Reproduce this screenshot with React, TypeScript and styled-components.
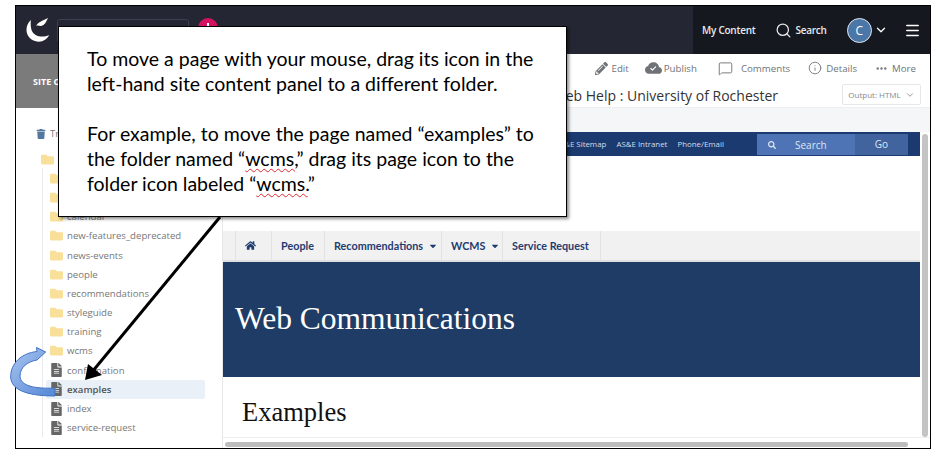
import React from 'react';
import styled, { createGlobalStyle } from 'styled-components';
import { FaTrash, FaFolder, FaFileAlt, FaHome, FaPencilAlt, FaCaretDown, FaSearch } from 'react-icons/fa';
import { BsCloudCheckFill } from 'react-icons/bs';
import { MessageSquare, Info, MoreHorizontal, Search, ChevronDown, Menu } from 'lucide-react';

const GlobalStyle = createGlobalStyle`
  html, body {
    margin: 0;
    padding: 0;
    background: #fff;
    overflow: hidden;
  }
  * { box-sizing: border-box; }
`;

// --- Page frame ---
const Page = styled.div`
  position: relative;
  width: 935px;
  height: 455px;
  padding: 5px 4px 6px 15px;
  font-family: 'Open Sans', sans-serif;
`;

const Frame = styled.div`
  width: 916px;
  height: 444px;
  border: 1px solid #000;
  display: flex;
  flex-direction: column;
  overflow: hidden;
`;

// --- Top bar ---
const TopBar = styled.header`
  height: 48px;
  flex: none;
  display: flex;
  background: #242733;
`;

const TopLeft = styled.div`
  flex: 1;
  display: flex;
  align-items: center;
  padding-left: 9px;
  gap: 7px;
`;

const SiteBox = styled.div`
  width: 132px;
  height: 24px;
  margin-top: 2px;
  border: 1px solid #3b4150;
  border-radius: 3px;
`;

const Badge = styled.div`
  width: 20px;
  height: 20px;
  border-radius: 50%;
  background: #d5125f;
  margin-left: 2px;
  margin-top: -4px;
  display: flex;
  justify-content: center;
  padding-top: 5px;
  &::before {
    content: '';
    width: 2px;
    height: 3px;
    background: #fff;
  }
`;

const TopRight = styled.div`
  width: 237px;
  flex: none;
  display: flex;
  align-items: center;
  background: #15181f;
  color: #fff;
  font-size: 10px;
  padding-left: 9px;
`;

const TopLink = styled.span<{ $left?: number }>`
  display: flex;
  align-items: center;
  gap: 3px;
  margin-left: ${p => p.$left ?? 0}px;
  color: #e8e9ec;
  font-weight: 600;
  letter-spacing: -0.25px;
  white-space: nowrap;
`;

const Avatar = styled.div`
  width: 25px;
  height: 25px;
  margin-left: 20px;
  border-radius: 50%;
  border: 1px solid #dfe6ee;
  background: #4a76a8;
  color: #fff;
  font-size: 12px;
  display: flex;
  align-items: center;
  justify-content: center;
  flex: none;
`;

const TopIcon = styled.span<{ $left: number }>`
  display: flex;
  margin-left: ${p => p.$left}px;
`;

// --- Body ---
const Body = styled.div`
  flex: 1;
  display: flex;
  min-height: 0;
`;

const Sidebar = styled.aside`
  width: 207px;
  flex: none;
  display: flex;
  flex-direction: column;
  border-right: 1px solid #e6e8ec;
`;

const SidebarHead = styled.div`
  height: 54px;
  flex: none;
  background: #7b7b7b;
  color: #fff;
  font-size: 9px;
  font-weight: 700;
  display: flex;
  align-items: center;
  padding-left: 17px;
`;

const Tree = styled.div`
  position: relative;
  padding: 16px 0 0 20px;
`;

const TreeLine = styled.div`
  position: absolute;
  left: 26px;
  top: 60px;
  height: 269px;
  width: 1px;
  background: #e9eaed;
`;

const TrashRow = styled.div`
  display: flex;
  align-items: center;
  gap: 4px;
  height: 19px;
  font-size: 9.5px;
  color: #777;
  margin-bottom: 6.5px;
`;

const Row = styled.div<{ $indent?: boolean; $active?: boolean }>`
  display: flex;
  align-items: center;
  gap: 4px;
  height: 19.2px;
  width: 159px;
  margin-left: ${p => (p.$indent ? 10 : 0)}px;
  padding-left: ${p => (p.$indent ? 4 : 5)}px;
  border-radius: 2px;
  font-size: 9.6px;
  color: ${p => (p.$active ? '#555' : '#777')};
  font-weight: ${p => (p.$active ? 600 : 400)};
  background: ${p => (p.$active ? '#e9f0f8' : 'transparent')};
`;

const FolderIcon = styled(FaFolder)`
  color: #f9e09a;
  font-size: 13px;
  flex: none;
`;

const PageIcon = styled(FaFileAlt)`
  color: #666;
  font-size: 14px;
  flex: none;
  width: 13px;
`;

// --- Main column ---
const Main = styled.main`
  flex: 1;
  min-width: 0;
  display: flex;
  flex-direction: column;
`;

const Toolbar = styled.div`
  height: 30px;
  flex: none;
  display: flex;
  justify-content: flex-end;
  align-items: center;
  padding: 0 14px 2px 0;
  color: #6f7378;
  font-size: 9.7px;
`;

const Tool = styled.span<{ $left: number; $gap?: number }>`
  display: flex;
  align-items: center;
  gap: ${p => p.$gap ?? 4}px;
  margin-left: ${p => p.$left}px;
`;

const TitleRow = styled.div`
  height: 24px;
  flex: none;
  display: flex;
  justify-content: flex-end;
  align-items: center;
  padding-right: 9px;
  border-bottom: 1px solid #eceef1;
`;

const PageTitle = styled.h1`
  margin: 0 64px 1px 0;
  font-size: 14px;
  font-weight: 400;
  color: #333;
  white-space: nowrap;
`;

const OutputSelect = styled.div`
  width: 79px;
  height: 21px;
  margin-top: -2px;
  border: 1px solid #e5e7ea;
  border-radius: 2px;
  color: #888;
  font-size: 8px;
  display: flex;
  align-items: center;
  justify-content: center;
  gap: 4px;
`;

const Band = styled.div`
  height: 24px;
  flex: none;
  background: #f5f6f8;
`;

const PreviewRow = styled.div`
  flex: 1;
  min-height: 0;
  display: flex;
`;

const Preview = styled.div`
  width: 697px;
  flex: none;
  display: flex;
  flex-direction: column;
`;

const ScrollTrack = styled.div`
  flex: 1;
  padding: 2px 0 0 2px;
`;

const ScrollThumb = styled.div`
  width: 6px;
  height: 303px;
  border-radius: 3px;
  background: #c4c4c4;
`;

const Masthead = styled.div`
  height: 24px;
  flex: none;
  background: #1a3a70;
  display: flex;
  justify-content: flex-end;
  align-items: center;
  padding-right: 12px;
  color: #d5dde9;
  font-size: 7.9px;
`;

const MastLink = styled.span<{ $right: number }>`
  margin-right: ${p => p.$right}px;
  white-space: nowrap;
`;

const SearchBox = styled.div`
  width: 98px;
  height: 21px;
  background: #4e74b6;
  color: #dfe6f2;
  font-size: 10px;
  display: flex;
  align-items: center;
  padding: 1px 0 0 11px;
  gap: 19px;
`;

const GoButton = styled.div`
  width: 53px;
  height: 21px;
  background: #41649f;
  color: #dfe6f2;
  font-size: 10px;
  display: flex;
  align-items: center;
  justify-content: center;
`;

const Spacer = styled.div`
  height: 75px;
  flex: none;
`;

const NavBar = styled.nav`
  height: 31px;
  flex: none;
  display: flex;
  padding-left: 12px;
  background: #f1f1f1;
  border-bottom: 2px solid #e0e0e0;
  font-family: Lato, sans-serif;
  font-size: 10.8px;
  font-weight: 700;
  color: #1f3c70;
`;

const NavItem = styled.div<{ $width: number }>`
  width: ${p => p.$width}px;
  display: flex;
  align-items: center;
  padding-left: 9px;
  gap: 5px;
  border-left: 1px solid #e3e3e3;
  white-space: nowrap;
`;

const NavEnd = styled.div`
  border-left: 1px solid #e3e3e3;
`;

const Hero = styled.div`
  height: 115px;
  flex: none;
  background: #1f3c66;
  color: #fff;
  display: flex;
  align-items: center;
  padding: 0 0 2px 12px;
  font-family: 'Liberation Serif', serif;
  font-size: 31.5px;
`;

const Content = styled.div`
  flex: 1;
  padding: 20px 0 0 19px;
  font-family: 'Liberation Serif', serif;
  font-size: 26.5px;
  color: #111;
`;

const HScroll = styled.div`
  height: 11px;
  flex: none;
  padding: 4px 0 0 2px;
  border-top: 1px solid #eee;
`;

const HThumb = styled.div`
  width: 683px;
  height: 5px;
  border-radius: 3px;
  background: #bdbdbd;
`;

// --- Overlays: the callout and arrows sit on top of the screenshot ---
const Callout = styled.div`
  position: absolute;
  left: 58px;
  top: 26px;
  width: 509px;
  height: 191px;
  padding: 19px 10px 0 28px;
  background: #fff;
  border: 1px solid #000;
  box-shadow: 2px 2px 3px rgba(0, 0, 0, 0.45);
  font-family: Lato, sans-serif;
  font-size: 19.5px;
  line-height: 25px;
  color: #000;
  white-space: nowrap;
`;

const Para = styled.p`
  margin: 0 0 25px;
`;

const Squiggle = styled.span`
  text-decoration: underline wavy #e0282e 1px;
  text-underline-offset: 2px;
`;

const Arrows = styled.svg`
  position: absolute;
  left: 0;
  top: 0;
  pointer-events: none;
`;

const folders = ['new-features_deprecated', 'news-events', 'people', 'recommendations', 'styleguide', 'training', 'wcms'];
const pages = ['confirmation', 'examples', 'index', 'service-request'];

export default function App() {
  return (
    <Page>
      <GlobalStyle />
      <Frame>
        <TopBar>
          <TopLeft>
            <svg width="25" height="26" viewBox="0 0 25 26">
              <path d="M6 3 C-1 9 0 21 10 24 C16 26 22 23 24 18 C18 21 9 20 6.5 13 C5.5 9 5.5 6 6 3Z" fill="#fff" />
              <path d="M11 9 C13 5 17 4 23 1 C21 5 20 8 16 9 C14 9 13 8 11 9Z" fill="#fff" />
            </svg>
            <SiteBox />
            <Badge />
          </TopLeft>
          <TopRight>
            <TopLink>My Content</TopLink>
            <TopLink $left={20}>
              <Search size={17} strokeWidth={1.8} />
              Search
            </TopLink>
            <Avatar>C</Avatar>
            <TopIcon $left={2}>
              <ChevronDown size={14} strokeWidth={2.2} />
            </TopIcon>
            <TopIcon $left={16}>
              <Menu size={17} strokeWidth={2.2} />
            </TopIcon>
          </TopRight>
        </TopBar>
        <Body>
          <Sidebar>
            <SidebarHead>SITE C</SidebarHead>
            <Tree>
              <TreeLine />
              <TrashRow>
                <FaTrash color="#54789f" size={10} />
                Trash
              </TrashRow>
              <Row><FolderIcon /></Row>
              <Row $indent><FolderIcon /></Row>
              <Row $indent><FolderIcon /></Row>
              <Row $indent><FolderIcon />calendar</Row>
              {folders.map(name => (
                <Row $indent key={name}><FolderIcon />{name}</Row>
              ))}
              {pages.map(name => (
                <Row $indent $active={name === 'examples'} key={name}><PageIcon />{name}</Row>
              ))}
            </Tree>
          </Sidebar>
          <Main>
            <Toolbar>
              <Tool $left={0}><FaPencilAlt size={13} />Edit</Tool>
              <Tool $left={16} $gap={2}><BsCloudCheckFill size={17} />Publish</Tool>
              <Tool $left={21} $gap={8}><MessageSquare size={15} strokeWidth={1.5} />Comments</Tool>
              <Tool $left={18}><Info size={14} strokeWidth={1.5} />Details</Tool>
              <Tool $left={18}><MoreHorizontal size={13} strokeWidth={2.5} />More</Tool>
            </Toolbar>
            <TitleRow>
              <PageTitle>Web Help : University of Rochester</PageTitle>
              <OutputSelect>
                Output: HTML
                <ChevronDown size={10} strokeWidth={2} />
              </OutputSelect>
            </TitleRow>
            <Band />
            <PreviewRow>
              <Preview>
                <Masthead>
                  <MastLink $right={10}>AS&amp;E Sitemap</MastLink>
                  <MastLink $right={10}>AS&amp;E Intranet</MastLink>
                  <MastLink $right={33}>Phone/Email</MastLink>
                  <SearchBox>
                    <FaSearch size={8} />
                    Search
                  </SearchBox>
                  <GoButton>Go</GoButton>
                </Masthead>
                <Spacer />
                <NavBar>
                  <NavItem $width={36}><FaHome size={11} /></NavItem>
                  <NavItem $width={53}>People</NavItem>
                  <NavItem $width={117}>Recommendations<FaCaretDown size={10} /></NavItem>
                  <NavItem $width={61}>WCMS<FaCaretDown size={10} /></NavItem>
                  <NavItem $width={98}>Service Request</NavItem>
                  <NavEnd />
                </NavBar>
                <Hero>Web Communications</Hero>
                <Content>Examples</Content>
              </Preview>
              <ScrollTrack>
                <ScrollThumb />
              </ScrollTrack>
            </PreviewRow>
            <HScroll>
              <HThumb />
            </HScroll>
          </Main>
        </Body>
      </Frame>
      <Callout>
        <Para>
          To move a page with your mouse, drag its icon in the
          <br />
          left-hand site content panel to a different folder.
        </Para>
        <Para>
          For example, to move the page named “examples” to
          <br />
          the folder named “<Squiggle>wcms,</Squiggle>” drag its page icon to the
          <br />
          folder icon labeled “<Squiggle>wcms.</Squiggle>”
        </Para>
      </Callout>
      <Arrows width="935" height="455" viewBox="0 0 935 455">
        <defs>
          <linearGradient id="curve" x1="0" y1="0" x2="1" y2="1">
            <stop offset="0" stopColor="#a9c5f0" />
            <stop offset="1" stopColor="#5487d6" />
          </linearGradient>
        </defs>
        <path
          d="M45.7 352 L36.5 347.5 L37 351.5 C22 353 10.5 363 10.7 377 C11 389 25 396 55 396 L55 388 C35 389 20 386 20 376 C20 367 28 361.5 37 360 Z"
          fill="url(#curve)"
          stroke="#4472c4"
          strokeWidth="1"
        />
        <line x1="220" y1="217" x2="92" y2="372" stroke="#000" strokeWidth="3" />
        <polygon points="85,380 88,364 102,375" fill="#000" />
      </Arrows>
    </Page>
  );
}
